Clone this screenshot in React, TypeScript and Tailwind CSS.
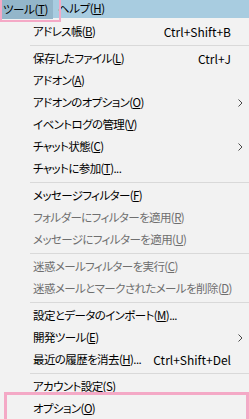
type Item =
  | { sep: true }
  | { sep?: false; label: string; key: string; after?: string; shortcut?: string; sub?: boolean; disabled?: boolean };

const ITEMS: Item[] = [
  { label: "アドレス帳", key: "B", shortcut: "Ctrl+Shift+B" },
  { sep: true },
  { label: "保存したファイル", key: "L", shortcut: "Ctrl+J" },
  { label: "アドオン", key: "A" },
  { label: "アドオンのオプション", key: "O", sub: true },
  { label: "イベントログの管理", key: "V" },
  { label: "チャット状態", key: "C", sub: true },
  { label: "チャットに参加", key: "T", after: "..." },
  { sep: true },
  { label: "メッセージフィルター", key: "F" },
  { label: "フォルダーにフィルターを適用", key: "R", disabled: true },
  { label: "メッセージにフィルターを適用", key: "U", disabled: true },
  { sep: true },
  { label: "迷惑メールフィルターを実行", key: "C", disabled: true },
  { label: "迷惑メールとマークされたメールを削除", key: "D", disabled: true },
  { sep: true },
  { label: "設定とデータのインポート", key: "M", after: "..." },
  { label: "開発ツール", key: "E", sub: true },
  { label: "最近の履歴を消去", key: "H", after: "...", shortcut: "Ctrl+Shift+Del" },
  { sep: true },
  { label: "アカウント設定", key: "S" },
  { label: "オプション", key: "O" },
];

function Chevron() {
  return (
    <svg width="5" height="8" viewBox="0 0 5 8" className="block">
      <polyline points="0.5,0.5 4,4 0.5,7.5" fill="none" stroke="#4a4a4a" strokeWidth="1" />
    </svg>
  );
}

export default function App() {
  return (
    <div
      className="relative w-[249px] h-[419px] overflow-hidden bg-[#f2f2f2] text-[11.5px] text-black [font-feature-settings:'palt'] leading-none"
      style={{ fontFamily: '"Noto Sans CJK JP", "Noto Sans", sans-serif' }}
    >
      {/* menu bar */}
      <div className="flex h-[18px] bg-[#a8cce0] tracking-[-0.4px]">
        <div className="flex items-center h-[19px] pl-[3px] pr-[5px] bg-[#93b6ca]">
          ツール(<u>T</u>)
        </div>
        <div className="flex items-center pl-[5px]">
          ヘルプ(<u>H</u>)
        </div>
      </div>

      <div className="pt-[3px]">
        {ITEMS.map((it, i) =>
          it.sep ? (
            <div key={i} className="h-[5px] flex items-center">
              <div className="ml-[30px] flex-1 h-px bg-[#d9d9d9]" />
            </div>
          ) : (
            <div
              key={i}
              className={`h-[22px] flex items-center pl-[33px] pr-[6px] whitespace-nowrap ${it.disabled ? "text-[#6f6f6f]" : "text-black"}`}
            >
              <span className="flex-1 tracking-[-0.6px]">
                {it.label}(<u>{it.key}</u>){it.after}
              </span>
              {it.shortcut && <span className="ml-[6px] text-[12px]">{it.shortcut}</span>}
              <span className="w-[12px] flex justify-end">{it.sub && <Chevron />}</span>
            </div>
          )
        )}
      </div>

      {/* annotation boxes */}
      <div className="absolute left-0 top-[-3px] w-[61px] h-[25px] border-[2px] border-[#f4a9c6]" />
      <div className="absolute left-[4px] top-[392px] w-[245px] h-[30px] border-[3px] border-[#f4a9c6]" />
    </div>
  );
}
